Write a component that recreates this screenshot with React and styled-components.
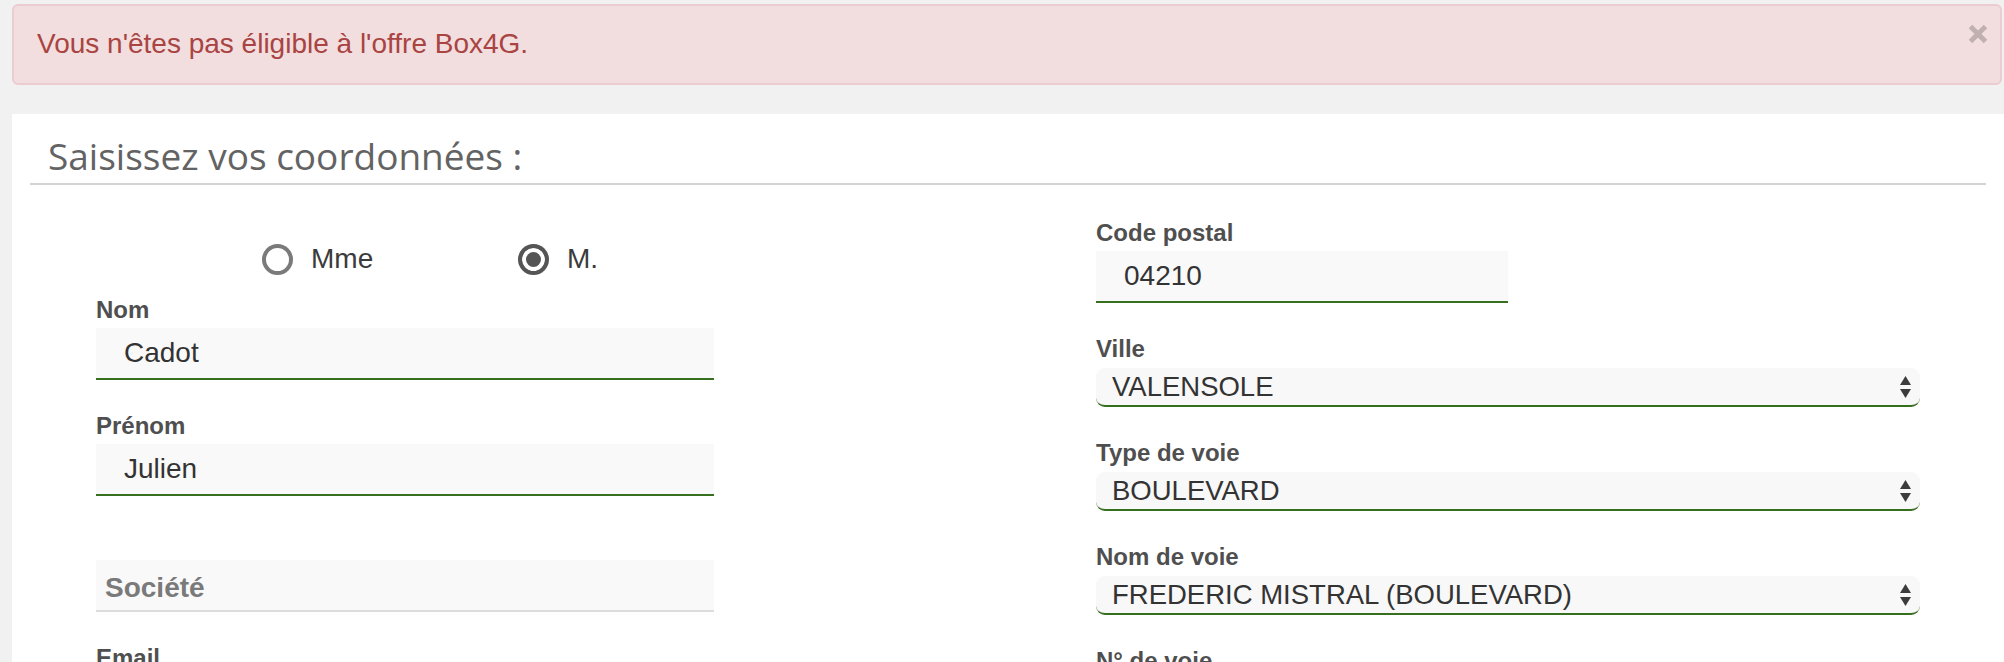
import React from "react";
import styled, { createGlobalStyle } from "styled-components";

const GlobalStyle = createGlobalStyle`
  html, body { margin: 0; padding: 0; overflow: hidden; background: #f1f1f1; }
  body { font-family: "Liberation Sans", Arial, sans-serif; }
  * { box-sizing: border-box; }
`;

const GREEN = "#36701f";

const Page = styled.div`
  padding: 4px 0 0 12px;
`;

const Alert = styled.div`
  display: flex;
  align-items: center;
  justify-content: space-between;
  height: 81px;
  margin-right: 2px;
  padding: 0 12px 2px 23px;
  background: #f2dede;
  border: 2px solid #ebccd1;
  border-radius: 6px;
  color: #a94442;
  font-size: 28px;
`;

const AlertText = styled.span`
  line-height: 40px;
`;

const CloseButton = styled.button`
  align-self: flex-start;
  margin-top: 18px;
  padding: 0;
  border: 0;
  background: transparent;
  width: 20px;
  height: 20px;
  display: flex;
  cursor: pointer;
`;

const Panel = styled.section`
  margin-top: 29px;
  background: #fff;
  padding: 0 18px 60px;
`;

const Heading = styled.h2`
  margin: 0;
  padding: 22px 0 7px 18px;
  font-family: "Open Sans", sans-serif;
  font-weight: 400;
  font-size: 37px;
  line-height: 40px;
  color: #636363;
  border-bottom: 2px solid #d4d4d4;
`;

const Columns = styled.div`
  display: grid;
  grid-template-columns: 618px 824px;
  column-gap: 382px;
  padding-left: 66px;
  align-items: start;
`;

const Column = styled.div`
  display: flex;
  flex-direction: column;
  gap: 32px;
  padding-top: ${(p) => p.$top}px;
`;

const RadioRow = styled.div`
  display: flex;
  align-items: center;
  height: 40px;
  padding-left: 166px;
  margin-bottom: -15px;
`;

const RadioOption = styled.label`
  display: inline-flex;
  align-items: center;
  flex: none;
  gap: 18px;
  width: 256px;
  font-size: 28px;
  color: #3b3b3b;
  cursor: pointer;
`;

const RadioCircle = styled.span`
  width: 31px;
  height: 31px;
  border-radius: 50%;
  border: 4px solid ${(p) => (p.$checked ? "#555" : "#7a7a7a")};
  background: ${(p) => (p.$checked ? "#555" : "#fff")};
  box-shadow: ${(p) => (p.$checked ? "inset 0 0 0 4px #fff" : "none")};
  flex: none;
`;

const Field = styled.div`
  display: flex;
  flex-direction: column;
`;

const Label = styled.label`
  display: block;
  height: 28px;
  line-height: 28px;
  margin-bottom: 4px;
  font-size: 24px;
  font-weight: 700;
  color: #4f4f4f;
`;

const TextInput = styled.input`
  display: block;
  width: ${(p) => p.$width || "100%"};
  height: 52px;
  margin: 0;
  padding: ${(p) => (p.$placeholderStyle ? "6px 0 0 9px" : "0 0 0 28px")};
  border: 0;
  border-bottom: 2px solid ${(p) => (p.$filled ? GREEN : "#dcdcdc")};
  border-radius: 0;
  background: #f9f9f9;
  font-family: "Liberation Sans", Arial, sans-serif;
  font-size: 28px;
  color: #333;
  outline: none;

  &::placeholder {
    color: #7a7a7a;
    font-weight: 700;
    opacity: 1;
  }
`;

const SelectBox = styled.div`
  display: flex;
  align-items: center;
  justify-content: space-between;
  height: 39px;
  margin-top: 1px;
  padding: 0 8px 0 16px;
  background: #f8f8f8;
  border-bottom: 2px solid ${GREEN};
  border-radius: 9px;
  font-size: 27.5px;
  color: #333;
  cursor: pointer;
`;

const SelectValue = styled.span`
  line-height: 37px;
  white-space: nowrap;
`;

const Arrows = () => (
  <svg width="13" height="26" viewBox="0 0 13 26" aria-hidden="true">
    <path d="M6.5 2 L12 11 L1 11 Z" fill="#3c3c3c" />
    <path d="M1 15 L12 15 L6.5 24 Z" fill="#3c3c3c" />
  </svg>
);

const CloseIcon = () => (
  <svg width="20" height="20" viewBox="0 0 20 20" aria-hidden="true">
    <path d="M2.5 2.5 L17.5 17.5 M17.5 2.5 L2.5 17.5" stroke="#c0b0b0" strokeWidth="5" />
  </svg>
);

const Select = ({ value }) => (
  <SelectBox>
    <SelectValue>{value}</SelectValue>
    <Arrows />
  </SelectBox>
);

export default function App() {
  return (
    <>
      <GlobalStyle />
      <Page>
        <Alert role="alert">
          <AlertText>Vous n'êtes pas éligible à l'offre Box4G.</AlertText>
          <CloseButton aria-label="Fermer">
            <CloseIcon />
          </CloseButton>
        </Alert>
        <Panel>
          <Heading>Saisissez vos coordonnées :</Heading>
          <Columns>
            <Column $top={54}>
              <RadioRow>
                <RadioOption>
                  <RadioCircle />
                  Mme
                </RadioOption>
                <RadioOption>
                  <RadioCircle $checked />
                  M.
                </RadioOption>
              </RadioRow>
              <Field>
                <Label>Nom</Label>
                <TextInput $filled defaultValue="Cadot" />
              </Field>
              <Field>
                <Label>Prénom</Label>
                <TextInput $filled defaultValue="Julien" />
              </Field>
              <Field>
                <Label />
                <TextInput $placeholderStyle placeholder="Société" />
              </Field>
              <Field>
                <Label>Email</Label>
                <TextInput $placeholderStyle placeholder="" />
              </Field>
            </Column>
            <Column $top={34}>
              <Field>
                <Label>Code postal</Label>
                <TextInput $filled $width="412px" defaultValue="04210" />
              </Field>
              <Field>
                <Label>Ville</Label>
                <Select value="VALENSOLE" />
              </Field>
              <Field>
                <Label>Type de voie</Label>
                <Select value="BOULEVARD" />
              </Field>
              <Field>
                <Label>Nom de voie</Label>
                <Select value="FREDERIC MISTRAL (BOULEVARD)" />
              </Field>
              <Field>
                <Label>N° de voie</Label>
                <TextInput $placeholderStyle $width="412px" />
              </Field>
            </Column>
          </Columns>
        </Panel>
      </Page>
    </>
  );
}
